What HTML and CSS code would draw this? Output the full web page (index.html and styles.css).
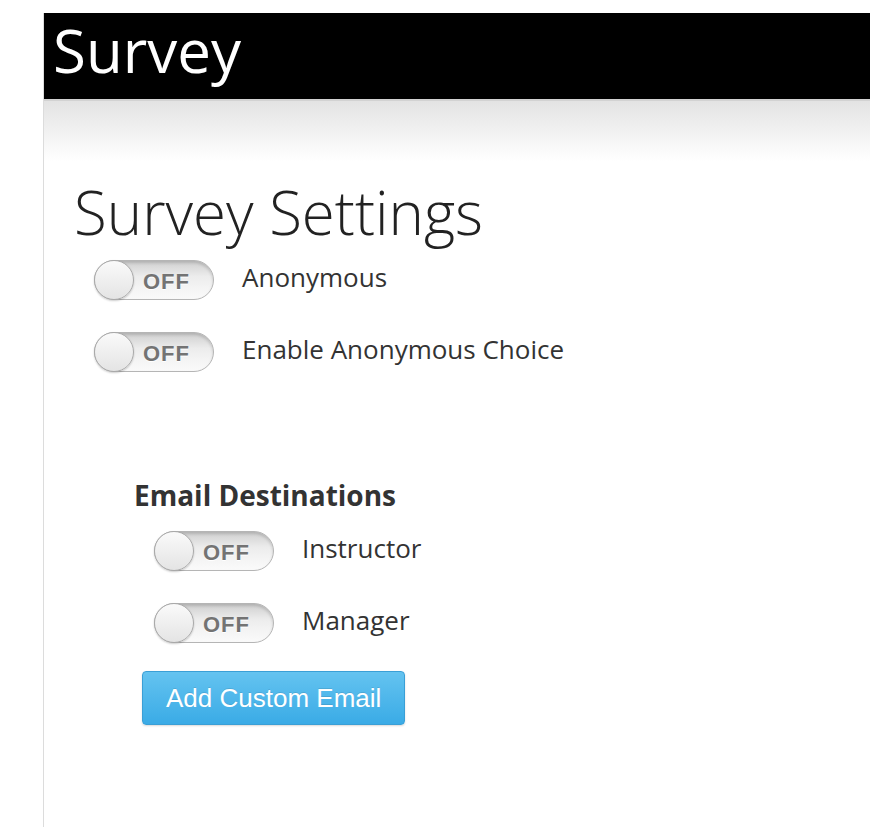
FILE: index.html
```html
<!DOCTYPE html>
<html lang="en">

<head>
    <meta charset="UTF-8">
    <meta name="viewport" content="width=device-width, initial-scale=1.0">
    <title>Survey</title>
    <link rel="stylesheet" href="styles.css">
</head>

<body>
    <div class="panel">
        <header class="topbar">
            <h1>Survey</h1>
        </header>

        <main class="content">
            <h2>Survey Settings</h2>

            <div class="setting">
                <span class="toggle"><span class="knob"></span><span class="state">OFF</span></span>
                <span class="label">Anonymous</span>
            </div>
            <div class="setting">
                <span class="toggle"><span class="knob"></span><span class="state">OFF</span></span>
                <span class="label">Enable Anonymous Choice</span>
            </div>

            <section class="emails">
                <h3>Email Destinations</h3>
                <div class="setting">
                    <span class="toggle"><span class="knob"></span><span class="state">OFF</span></span>
                    <span class="label">Instructor</span>
                </div>
                <div class="setting">
                    <span class="toggle"><span class="knob"></span><span class="state">OFF</span></span>
                    <span class="label">Manager</span>
                </div>
                <button class="btn-add">Add Custom Email</button>
            </section>
        </main>
    </div>
</body>

</html>
```

FILE: styles.css
```css
html,
body {
    height: 100%;
}

body {
    margin: 0;
    padding: 13px 0 0 43px;
    box-sizing: border-box;
    font-family: "Open Sans", sans-serif;
    color: #333;
    background-color: #fff;
    overflow: hidden;
}

.panel {
    min-height: 100%;
    border-left: 1px solid #dcdcdc;
}

.topbar {
    height: 86px;
    background-color: #000;
    border-bottom: 2px solid #d2d2d2;
}

.topbar h1 {
    margin: 0;
    padding-left: 9px;
    font-size: 60px;
    font-weight: 400;
    line-height: 74px;
    color: #fff;
}

.content {
    padding: 75px 0 60px 30px;
    background: linear-gradient(#e3e3e3, #fff 60px);
}

.content h2 {
    margin: 0 0 12px;
    font-size: 60px;
    font-weight: 300;
    line-height: 72px;
    color: #222;
}

.setting {
    display: flex;
    align-items: flex-start;
    margin: 0 0 32px 20px;
}

.toggle {
    position: relative;
    display: flex;
    align-items: center;
    box-sizing: border-box;
    width: 120px;
    height: 40px;
    border: 1px solid #b5b5b5;
    border-radius: 20px;
    background: linear-gradient(#cfcfcf, #ececec 40%, #f4f4f4 70%, #fafafa);
    box-shadow: inset 0 2px 3px rgba(0, 0, 0, 0.15);
}

.knob {
    position: absolute;
    left: -1px;
    top: -1px;
    width: 40px;
    height: 40px;
    box-sizing: border-box;
    border: 1px solid #a9a9a9;
    border-radius: 50%;
    background: linear-gradient(#fafafa, #e4e4e4);
    box-shadow: 0 1px 2px rgba(0, 0, 0, 0.2);
}

.state {
    margin: 4px 0 0 48px;
    font-family: "Liberation Sans", Arial, sans-serif;
    font-size: 22px;
    font-weight: 700;
    letter-spacing: 1px;
    color: #737373;
    text-shadow: 0 1px 0 #fff;
}

.label {
    margin: 1px 0 0 28px;
    font-size: 26px;
    line-height: 32px;
    color: #333;
}

.emails {
    margin: 107px 0 0 60px;
}

.emails h3 {
    margin: 0 0 20px;
    font-size: 28px;
    font-weight: 700;
    line-height: 32px;
    color: #333;
}

.emails .setting {
    margin-left: 20px;
}

.emails .setting:last-of-type {
    margin-bottom: 28px;
}

.btn-add {
    margin-left: 8px;
    height: 54px;
    padding: 0 23px;
    font-family: "Liberation Sans", Arial, sans-serif;
    font-size: 26px;
    color: #fff;
    border: 1px solid #3a9fd6;
    border-radius: 4px;
    background: linear-gradient(#64c3f0, #3aabe6);
    box-shadow: 0 1px 2px rgba(0, 0, 0, 0.15);
    text-shadow: 0 -1px 0 rgba(0, 0, 0, 0.1);
    cursor: pointer;
}
```
